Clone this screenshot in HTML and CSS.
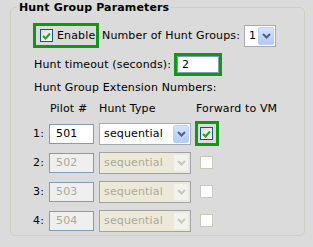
FILE: index.html
```html
<!DOCTYPE html>
<html lang="en">
<head>
    <meta charset="UTF-8">
    <title>Hunt Group Parameters</title>
    <link rel="stylesheet" href="styles.css">
</head>
<body>
    <fieldset class="panel">
        <legend>Hunt Group Parameters</legend>
        <div class="panel-body">
            <div class="line line-enable">
                <span class="mark mark-enable">
                    <span class="check check-on">
                        <svg width="9" height="8" viewBox="0 0 9 8"><path d="M1 4 L3.5 6.5 L8 1.5" fill="none" stroke="#22a022" stroke-width="2"/></svg>
                    </span>
                    Enable
                </span>
                <span class="label">Number of Hunt Groups:</span>
                <span class="select select-count">
                    <span class="select-value">1</span>
                    <span class="drop">
                        <svg width="9" height="6" viewBox="0 0 9 6"><path d="M1 1 L4.5 4.5 L8 1" fill="none" stroke="#4d6185" stroke-width="2"/></svg>
                    </span>
                </span>
            </div>

            <div class="line line-timeout">
                <span class="label">Hunt timeout (seconds):</span>
                <span class="mark mark-field">
                    <span class="field field-timeout">2</span>
                </span>
            </div>

            <div class="caption">Hunt Group Extension Numbers:</div>

            <div class="grid">
                <span></span>
                <span class="head head-pilot">Pilot #</span>
                <span class="head">Hunt Type</span>
                <span class="head head-vm">Forward to VM</span>

                <span class="num">1:</span>
                <span class="field">501</span>
                <span class="select select-type">
                    <span class="select-value">sequential</span>
                    <span class="drop">
                        <svg width="9" height="6" viewBox="0 0 9 6"><path d="M1 1 L4.5 4.5 L8 1" fill="none" stroke="#4d6185" stroke-width="2"/></svg>
                    </span>
                </span>
                <span class="mark mark-check">
                    <span class="check check-on">
                        <svg width="9" height="8" viewBox="0 0 9 8"><path d="M1 4 L3.5 6.5 L8 1.5" fill="none" stroke="#22a022" stroke-width="2"/></svg>
                    </span>
                </span>

                <span class="num">2:</span>
                <span class="field disabled">502</span>
                <span class="select select-type disabled">
                    <span class="select-value">sequential</span>
                    <span class="drop">
                        <svg width="9" height="6" viewBox="0 0 9 6"><path d="M1 1 L4.5 4.5 L8 1" fill="none" stroke="#c9c7ba" stroke-width="2"/></svg>
                    </span>
                </span>
                <span class="mark mark-check mark-off"><span class="check disabled"></span></span>

                <span class="num">3:</span>
                <span class="field disabled">503</span>
                <span class="select select-type disabled">
                    <span class="select-value">sequential</span>
                    <span class="drop">
                        <svg width="9" height="6" viewBox="0 0 9 6"><path d="M1 1 L4.5 4.5 L8 1" fill="none" stroke="#c9c7ba" stroke-width="2"/></svg>
                    </span>
                </span>
                <span class="mark mark-check mark-off"><span class="check disabled"></span></span>

                <span class="num">4:</span>
                <span class="field disabled">504</span>
                <span class="select select-type disabled">
                    <span class="select-value">sequential</span>
                    <span class="drop">
                        <svg width="9" height="6" viewBox="0 0 9 6"><path d="M1 1 L4.5 4.5 L8 1" fill="none" stroke="#c9c7ba" stroke-width="2"/></svg>
                    </span>
                </span>
                <span class="mark mark-check mark-off"><span class="check disabled"></span></span>
            </div>
        </div>
    </fieldset>
</body>
</html>
```

FILE: styles.css
```css
* {
    box-sizing: border-box;
}

body {
    margin: 0;
    padding: 0 0 0 10px;
    background: #dbdbdb;
    font-family: "DejaVu Sans", Verdana, sans-serif;
    font-size: 11px;
    line-height: 15px;
    letter-spacing: 0.15px;
    color: #000;
}

.panel {
    margin: 0;
    width: 295px;
    height: 236px;
    padding: 0 0 0 6px;
    border: 1px solid #d0d0bf;
    border-radius: 5px;
}

.panel legend {
    padding: 0 2px;
    font-weight: bold;
}

.panel-body {
    padding: 8px 0 0 16px;
}

.line {
    display: flex;
    align-items: center;
}

.line-enable {
    height: 25px;
}

.line-timeout {
    height: 23px;
    margin-top: 5px;
    padding-left: 1px;
}

.label {
    margin-left: 3px;
}

.line-timeout .label {
    margin-left: 0;
}

/* green highlight boxes */
.mark {
    display: flex;
    align-items: center;
    border: 3px solid #139713;
}

.mark-enable {
    width: 66px;
    height: 25px;
    padding: 0 0 0 4px;
    gap: 4px;
}

.mark-field {
    margin-left: 3px;
}

.mark-check {
    width: 24px;
    height: 25px;
    padding-left: 2px;
}

.mark-off {
    border-color: transparent;
}

/* checkboxes */
.check {
    display: flex;
    align-items: center;
    justify-content: center;
    width: 13px;
    height: 13px;
    border: 1px solid #1c5180;
    background: linear-gradient(135deg, #dcdcd7, #fff);
}

.check.disabled {
    border-color: #cac8bb;
    background: #fff;
}

/* text fields */
.field {
    display: block;
    width: 45px;
    height: 20px;
    padding-left: 6px;
    border: 1px solid #7f9db9;
    background: #fff;
    line-height: 18px;
}

.field.disabled {
    background: #efefef;
    color: #aca899;
}

.field-timeout {
    width: 42px;
    height: 17px;
    padding-left: 4px;
    line-height: 15px;
}

/* drop-down lists */
.select {
    display: flex;
    align-items: stretch;
    height: 22px;
    padding: 1px;
    border: 1px solid #a5acb2;
    background: #fff;
}

.select-count {
    width: 32px;
    margin-left: 4px;
}

.select-type {
    width: 92px;
}

.select-value {
    flex: 1;
    padding-left: 3px;
    line-height: 18px;
}

.drop {
    display: flex;
    align-items: center;
    justify-content: center;
    width: 16px;
    border: 1px solid #bad1fc;
    border-radius: 2px;
    background: linear-gradient(#d6e3fe, #b5c9f7);
}

.select.disabled {
    border-color: #a3a3a3;
    background: #ece9d8;
    color: #aca899;
}

.select.disabled .drop {
    border-color: #e8e8e4;
    background: #f2f2ee;
}

/* extension table */
.caption {
    margin-top: 4px;
    padding-left: 1px;
}

.grid {
    display: grid;
    grid-template-columns: 16px 50px 96px auto;
    grid-template-rows: 18px repeat(4, 29px);
    align-items: center;
    margin-top: 6px;
}

.head {
    align-self: start;
}

.head-pilot {
    padding-left: 1px;
}

.head-vm {
    padding-left: 1px;
}

.num {
    padding-right: 5px;
    text-align: right;
}
```
